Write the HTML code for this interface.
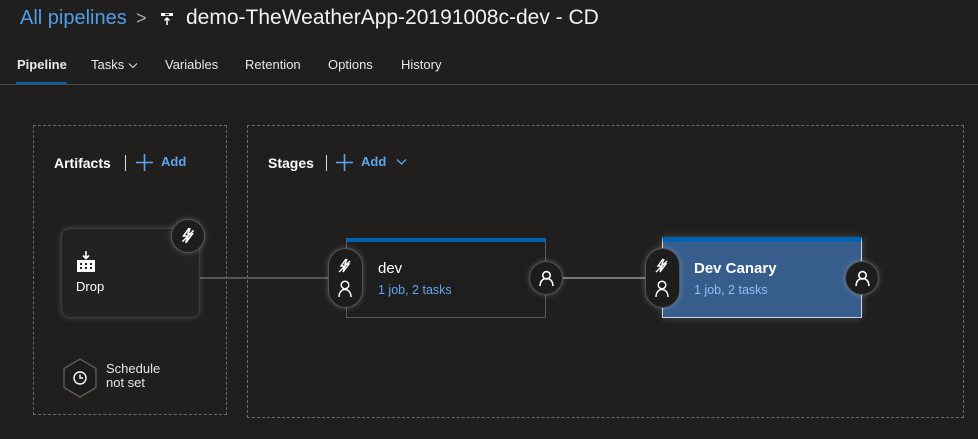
<!DOCTYPE html>
<html><head><meta charset="utf-8"><style>
*{margin:0;padding:0;box-sizing:border-box}
body{width:978px;height:439px;background:#201f1e;font-family:"Segoe UI","Liberation Sans",sans-serif;color:#fff;position:relative;overflow:hidden}
.a{position:absolute}
.blue{color:#5ea7ef}
.tab{position:absolute;top:57px;font-size:13px;color:#e8e8e8}
.dash{position:absolute;border:1px dashed #6a6a6a}
.circ{position:absolute;width:34px;height:34px;border-radius:50%;background:#1d1d1d;border:1px solid #555;box-shadow:0 0 6px rgba(255,255,255,.25);display:flex;align-items:center;justify-content:center}
.pill{position:absolute;width:35px;height:60px;border-radius:18px;background:#1d1d1d;border:1px solid #555;box-shadow:0 0 6px rgba(255,255,255,.25)}
</style></head><body>
<div class="a" style="left:20px;top:7px;font-size:20px;font-weight:300" ><span style="color:#4f9fe8">All pipelines</span></div>
<div class="a" style="left:136px;top:8px;font-size:18px;color:#aaa">&gt;</div>
<svg class="a" style="left:160px;top:12px" width="14" height="14" viewBox="0 0 14 14"><rect x="1" y="1" width="12" height="3" fill="#fff"/><rect x="5" y="1.7" width="4" height="1.6" fill="#201f1e"/><path d="M7 13V6M4.5 8.5L7 6l2.5 2.5" stroke="#fff" stroke-width="1.5" fill="none"/></svg>
<div class="a" style="left:186px;top:6px;font-size:21px;color:#f2f2f2">demo-TheWeatherApp-20191008c-dev - CD</div>
<div class="tab" style="left:17px;font-weight:bold">Pipeline</div>
<div class="a" style="left:16px;top:82px;width:51px;height:3px;background:#0063b1"></div>
<div class="tab" style="left:91px">Tasks <svg width="10" height="7" style="vertical-align:middle"><path d="M1 1.5l4 4 4-4" stroke="#ddd" fill="none" stroke-width="1.1"/></svg></div>
<div class="tab" style="left:165px">Variables</div>
<div class="tab" style="left:245px">Retention</div>
<div class="tab" style="left:328px">Options</div>
<div class="tab" style="left:401px">History</div>
<div class="a" style="left:0;top:84px;width:978px;height:1px;background:#4a4a4a"></div>

<div class="dash" style="left:33px;top:125px;width:194px;height:290px"></div>
<div class="dash" style="left:247px;top:125px;width:717px;height:293px"></div>

<div class="a" style="left:54px;top:155px;font-size:14px;font-weight:bold">Artifacts</div>
<div class="a" style="left:125px;top:155px;width:1px;height:16px;background:#ddd"></div>
<svg class="a" style="left:136px;top:154px" width="17" height="17"><path d="M8.5 0v17M0 8.5h17" stroke="#5ea7ef" stroke-width="1.6"/></svg>
<div class="a blue" style="left:161px;top:154px;font-size:13px;font-weight:bold">Add</div>
<div class="a" style="left:268px;top:155px;font-size:14px;font-weight:bold">Stages</div>
<div class="a" style="left:326px;top:155px;width:1px;height:16px;background:#ddd"></div>
<svg class="a" style="left:336px;top:154px" width="17" height="17"><path d="M8.5 0v17M0 8.5h17" stroke="#5ea7ef" stroke-width="1.6"/></svg>
<div class="a blue" style="left:361px;top:154px;font-size:13px;font-weight:bold">Add</div>
<svg class="a" style="left:396px;top:158px" width="11" height="8"><path d="M1 1.5l4.5 4.5 4.5-4.5" stroke="#5ea7ef" fill="none" stroke-width="1.3"/></svg>

<div class="a" style="left:199px;top:277px;width:131px;height:2px;background:#555"></div>
<div class="a" style="left:563px;top:277px;width:84px;height:2px;background:#777"></div>

<div class="a" style="left:61px;top:228px;width:139px;height:90px;border-radius:9px;border:1px solid #3c3c3c;background:#232221;box-shadow:0 0 6px rgba(255,255,255,.18)"></div>
<svg class="a" style="left:77px;top:251px" width="18" height="21" viewBox="0 0 18 21"><path d="M9 0v7M6 4.5L9 7.5 12 4.5" stroke="#fff" stroke-width="1.6" fill="none"/><path d="M0 9h18v12H0z" fill="#fff"/><rect x="3" y="12" width="2" height="2" fill="#232221"/><rect x="8" y="12" width="2" height="2" fill="#232221"/><rect x="13" y="12" width="2" height="2" fill="#232221"/><rect x="3" y="16" width="2" height="2" fill="#232221"/><rect x="8" y="16" width="2" height="2" fill="#232221"/><rect x="13" y="16" width="2" height="2" fill="#232221"/></svg>
<div class="a" style="left:76px;top:279px;font-size:13px">Drop</div>
<div class="circ" style="left:171px;top:219px"><svg width="18" height="18" viewBox="0 0 16 16"><path d="M9 1L4 8h4l-2 6 6-8H8l2-5" stroke="#fff" stroke-width="1.4" fill="none"/><path d="M3 13L13 3" stroke="#fff" stroke-width="1.3"/></svg></div>

<svg class="a" style="left:62px;top:358px" width="36" height="40" viewBox="0 0 36 40"><path d="M18 1L34 10.5V29.5L18 39 2 29.5V10.5z" fill="#1d1d1d" stroke="#666" stroke-width="1.2"/><circle cx="18" cy="20" r="6" stroke="#fff" stroke-width="1.4" fill="none"/><path d="M18 16.5V20h3" stroke="#fff" stroke-width="1.4" fill="none"/></svg>
<div class="a" style="left:106px;top:362px;font-size:13px;line-height:14px;color:#e6e6e6">Schedule<br>not set</div>

<div class="a" style="left:346px;top:238px;width:200px;height:80px;background:#1e1e1e;border:1px solid #5a5a5a;border-top:4px solid #0063b1"></div>
<div class="a" style="left:378px;top:260px;font-size:15px">dev</div>
<div class="a blue" style="left:378px;top:283px;font-size:12.5px">1 job, 2 tasks</div>

<div class="a" style="left:662px;top:237px;width:200px;height:81px;background:#375d8c;border:1px solid #c8d4e4;border-top:5px solid #0063b1;box-shadow:0 0 8px rgba(255,255,255,.2)"></div>
<div class="a" style="left:694px;top:260px;font-size:15px;font-weight:bold">Dev Canary</div>
<div class="a" style="left:694px;top:283px;font-size:12.5px;color:#8ec0f3">1 job, 2 tasks</div>

<div class="pill" style="left:328px;top:248px"></div>
<div class="pill" style="left:645px;top:248px"></div>
<svg class="a" style="left:336px;top:258px" width="18" height="42" viewBox="0 0 18 42"><path d="M10 1L5 8h4l-2 6 6-8H9l2-5" stroke="#fff" stroke-width="1.4" fill="none"/><path d="M3 14L14 3" stroke="#fff" stroke-width="1.3"/><circle cx="9" cy="27" r="3.8" stroke="#fff" stroke-width="1.5" fill="none"/><path d="M3 39c0-5 3-7.5 6-7.5s6 2.5 6 7.5" stroke="#fff" stroke-width="1.5" fill="none"/></svg>
<svg class="a" style="left:653px;top:258px" width="18" height="42" viewBox="0 0 18 42"><path d="M10 1L5 8h4l-2 6 6-8H9l2-5" stroke="#fff" stroke-width="1.4" fill="none"/><path d="M3 14L14 3" stroke="#fff" stroke-width="1.3"/><circle cx="9" cy="27" r="3.8" stroke="#fff" stroke-width="1.5" fill="none"/><path d="M3 39c0-5 3-7.5 6-7.5s6 2.5 6 7.5" stroke="#fff" stroke-width="1.5" fill="none"/></svg>
<div class="circ" style="left:529px;top:261px"><svg width="17" height="17" viewBox="0 0 16 16"><circle cx="8" cy="5" r="3.5" stroke="#fff" stroke-width="1.5" fill="none"/><path d="M2 15c0-5 3-7 6-7s6 2 6 7" stroke="#fff" stroke-width="1.5" fill="none"/></svg></div>
<div class="circ" style="left:845px;top:261px"><svg width="17" height="17" viewBox="0 0 16 16"><circle cx="8" cy="5" r="3.5" stroke="#fff" stroke-width="1.5" fill="none"/><path d="M2 15c0-5 3-7 6-7s6 2 6 7" stroke="#fff" stroke-width="1.5" fill="none"/></svg></div>
</body></html>
